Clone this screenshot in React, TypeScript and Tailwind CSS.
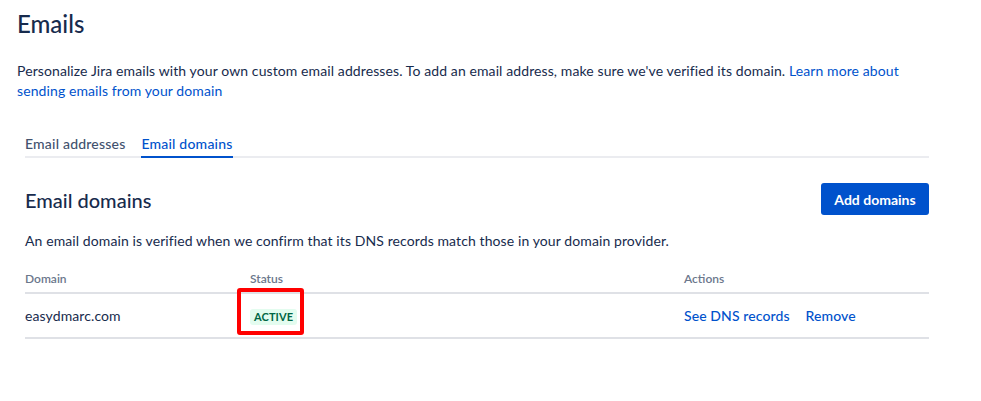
import React from "react";

export default function App() {
  return (
    <div
      className="w-[981px] h-[401px] bg-white overflow-hidden text-[#172B4D]"
      style={{ fontFamily: 'Lato, "Noto Sans", Arial, sans-serif' }}
    >
      <div className="ml-[17px] w-[912px]">
        <h1 className="pt-[9px] text-[24px] leading-[30px] font-medium text-[#172B4D]">Emails</h1>
        <p className="mt-[22px] text-[14px] leading-[20px] tracking-[0.1px] text-[#172B4D]">
          Personalize Jira emails with your own custom email addresses. To add an email address, make sure we've verified its domain.{" "}
          <a className="text-[#0052CC]">Learn more about sending emails from your domain</a>
        </p>

        <div className="ml-[8px] mt-[33px]">
          <div className="flex border-b-2 border-[#EBECF0] text-[14px] font-medium tracking-[0.2px]">
            <div className="pb-[2px] pr-[8px] text-[#42526E] leading-[20px]">Email addresses</div>
            <div className="relative ml-[8px] pb-[2px] text-[#0052CC] leading-[20px]">
              Email domains
              <div className="absolute left-0 right-0 -bottom-[2px] h-[2px] bg-[#0052CC]" />
            </div>
          </div>

          <div className="mt-[25px] flex items-center justify-between">
            <h2 className="text-[20px] leading-[28px] font-medium text-[#172B4D] mt-[2px]">Email domains</h2>
            <button className="h-[32px] w-[108px] rounded-[3px] bg-[#0052CC] text-white text-[14px] font-bold">
              Add domains
            </button>
          </div>

          <p className="mt-[16px] text-[14px] leading-[20px] tracking-[0.1px]">
            An email domain is verified when we confirm that its DNS records match those in your domain provider.
          </p>

          <div className="mt-[20px]">
            <div className="flex border-b-2 border-[#DFE1E6] text-[12px] font-semibold text-[#6B778C] leading-[16px] pb-[5px]">
              <div className="w-[225px]">Domain</div>
              <div className="w-[434px]">Status</div>
              <div>Actions</div>
            </div>
            <div className="flex items-center border-b-2 border-[#DFE1E6] h-[45px] text-[14px] tracking-[0.1px]">
              <div className="w-[225px]">easydmarc.com</div>
              <div className="w-[434px]">
                <span className="relative inline-block">
                  <span className="inline-block rounded-[3px] bg-[#E3FCEF] px-[4px] text-[11px] leading-[16px] font-bold text-[#006644]">
                    ACTIVE
                  </span>
                  <span className="absolute left-[-13px] top-[-17px] w-[67px] h-[47px] border-[4px] border-[#FF0000] rounded-[3px]" />
                </span>
              </div>
              <div className="flex gap-[16px] text-[#0052CC] font-medium">
                <a>See DNS records</a>
                <a>Remove</a>
              </div>
            </div>
          </div>
        </div>
      </div>
    </div>
  );
}
